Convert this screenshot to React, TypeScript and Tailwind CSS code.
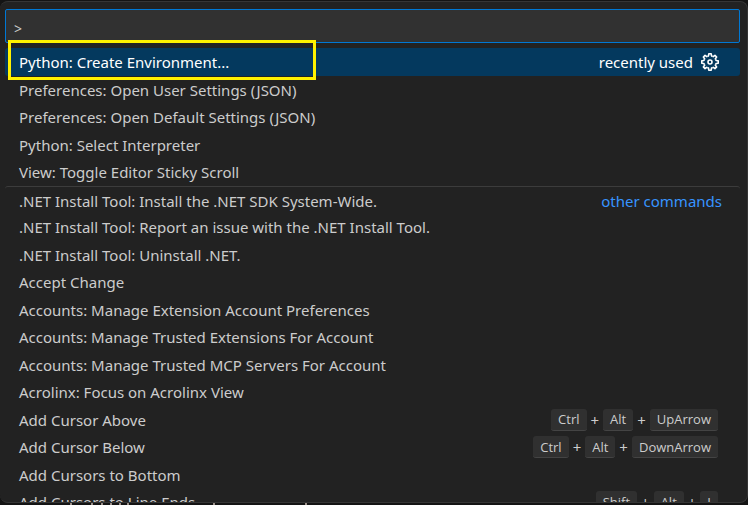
import { Fragment } from "react";

type Command = { label: string; group?: string; keys?: string[]; separated?: boolean };

const commands: Command[] = [
  { label: "Python: Create Environment...", group: "recently used" },
  { label: "Preferences: Open User Settings (JSON)" },
  { label: "Preferences: Open Default Settings (JSON)" },
  { label: "Python: Select Interpreter" },
  { label: "View: Toggle Editor Sticky Scroll" },
  { label: ".NET Install Tool: Install the .NET SDK System-Wide.", group: "other commands", separated: true },
  { label: ".NET Install Tool: Report an issue with the .NET Install Tool." },
  { label: ".NET Install Tool: Uninstall .NET." },
  { label: "Accept Change" },
  { label: "Accounts: Manage Extension Account Preferences" },
  { label: "Accounts: Manage Trusted Extensions For Account" },
  { label: "Accounts: Manage Trusted MCP Servers For Account" },
  { label: "Acrolinx: Focus on Acrolinx View" },
  { label: "Add Cursor Above", keys: ["Ctrl", "Alt", "UpArrow"] },
  { label: "Add Cursor Below", keys: ["Ctrl", "Alt", "DownArrow"] },
  { label: "Add Cursors to Bottom" },
  { label: "Add Cursors to Line Ends", keys: ["Shift", "Alt", "I"] },
];

const teeth = [0, 45, 90, 135, 180, 225, 270, 315];

function GearIcon() {
  return (
    <svg width="18" height="18" viewBox="0 0 18 18" fill="none" aria-hidden="true">
      {teeth.map((angle) => (
        <path
          key={angle}
          d="M6.6 3.3 7.5 2.9 7.8 0.8H10.2L10.5 2.9 11.4 3.3"
          transform={`rotate(${angle} 9 9)`}
          stroke="currentColor"
          strokeWidth="1.6"
          strokeLinejoin="round"
        />
      ))}
      <circle cx="9" cy="9" r="2" stroke="currentColor" strokeWidth="1.6" />
    </svg>
  );
}

function Keybinding({ keys }: { keys: string[] }) {
  return (
    <span className="mr-[22px] flex items-center gap-1">
      {keys.map((key, i) => (
        <Fragment key={key}>
          {i > 0 && <span>+</span>}
          <kbd className="flex h-[22px] items-center rounded-[3px] border-b border-[#444444] bg-[#303030] px-[7px] font-['Open_Sans',sans-serif] text-[13px] leading-5">
            {key}
          </kbd>
        </Fragment>
      ))}
    </span>
  );
}

function CommandRow({ command, selected }: { command: Command; selected: boolean }) {
  return (
    <li
      className={`relative flex items-center justify-between rounded-[3px] odd:h-7 even:h-[27px] ${
        selected ? "bg-[#04395e] text-white" : ""
      } ${command.separated ? "border-t border-[#3c3c3c] pt-px" : ""}`}
    >
      <button type="button" className="flex-1 truncate pl-[14px] text-left">
        {command.label}
      </button>
      {command.group && !selected && <span className="mr-[18px] text-[#3794ff]">{command.group}</span>}
      {command.group && selected && (
        <span className="mr-[21px] flex items-center gap-2">
          {command.group}
          <button type="button" aria-label="Configure keybinding">
            <GearIcon />
          </button>
        </span>
      )}
      {command.keys && <Keybinding keys={command.keys} />}
      {selected && (
        <span className="pointer-events-none absolute -top-2 left-[3px] h-10 w-[308px] border-[3px] border-[#fff200]" />
      )}
    </li>
  );
}

// Tops of the editor's glyphs that show below the palette
function EditorEdge() {
  return (
    <svg className="h-[2px] w-full shrink-0" aria-hidden="true">
      {[70, 91, 101, 110, 119, 127, 213, 305].map((x) => (
        <rect key={x} x={x} y="0" width="2" height="2" fill="#9a8f88" />
      ))}
    </svg>
  );
}

export default function App() {
  return (
    <main className="flex h-screen flex-col bg-[#141414] pt-px font-['Noto_Sans',sans-serif] text-[15px] leading-5 text-[#cccccc]">
      <section className="flex min-h-0 flex-1 flex-col overflow-hidden rounded-lg border border-l-0 border-[#353535] bg-[#222222] pt-[7px] pr-[7px] pl-[5px]">
        <input
          type="text"
          aria-label="Command palette"
          defaultValue=">"
          className="h-[34px] w-full shrink-0 rounded-[2px] border border-[#0078d4] bg-[#313131] px-2 pt-1 text-sm outline-none"
        />
        <ul className="mt-[5px] min-h-0 flex-1">
          {commands.map((command, i) => (
            <CommandRow key={command.label} command={command} selected={i === 0} />
          ))}
        </ul>
      </section>
      <EditorEdge />
    </main>
  );
}
